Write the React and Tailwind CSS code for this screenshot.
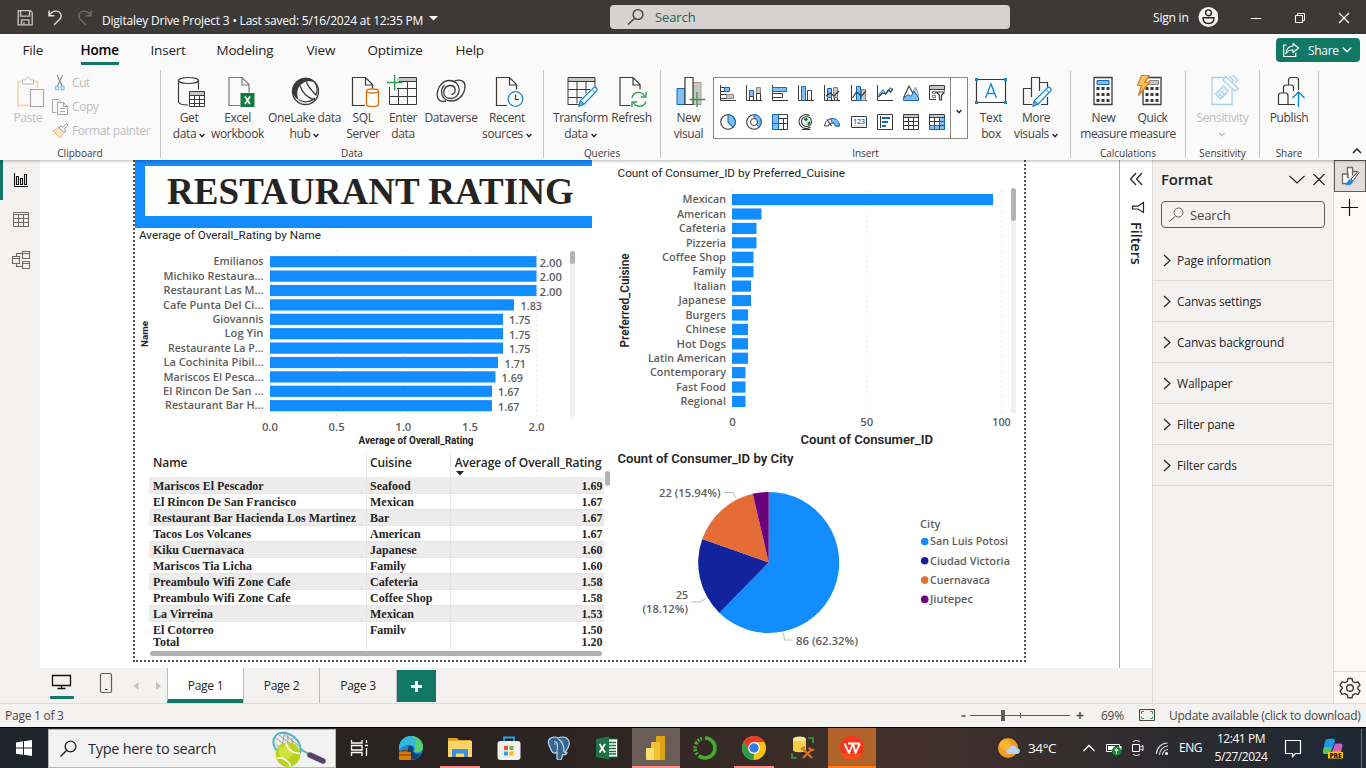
import React from "react";

const GREEN = "#117865";
const BLUE = "#118dff";

/* Drawing surface: the box is given as left, top, width, height. */
function Art({ box, className = "", children, ...rest }) {
  const [x, y, w, h] = box;
  return (
    <svg viewBox={`${x} ${y} ${w} ${h}`} width={w} height={h} fill="none" className={`block shrink-0 ${className}`} {...rest}>
      {children}
    </svg>
  );
}

function Caret({ className = "" }) {
  return (
    <Art box={[0, 0, 6, 5]} className={className}>
      <path d="M.6 1 3 3.6 5.4 1" stroke="currentColor" strokeWidth="1.4" />
    </Art>
  );
}

/* ------------------------------ title bar ------------------------------ */

function TitleBar() {
  return (
    <div className="flex h-[34px] shrink-0 items-center bg-[#3b3a38] text-white">
      <Art box={[0, 0, 102, 34]}>
        <g stroke="#c9c8c6" strokeWidth="1.3">
          <path d="M18.2 10.6h12.2l1.8 1.8v12.4h-14z" />
          <path d="M20.6 10.8v5.4h9v-5.4M21.5 24.6v-4.7h7.4v4.7M24 22v2.4" />
        </g>
        <path d="M49 10.5v5.3h5.3M49.3 15.5c3-5.3 9.2-5.6 11.2-2 1.2 2.4.6 4.3-1 6l-5.3 5.2" stroke="#e1dfdd" strokeWidth="1.4" />
        <path d="M91 10.5v5.3h-5.3M90.7 15.5c-3-5.3-9.2-5.6-11.2-2-1.2 2.4-.6 4.3 1 6l5.3 5.2" stroke="#6f6e6c" strokeWidth="1.4" />
      </Art>
      <div className="flex w-[508px] items-center">
        <span className="mt-2 text-[12px] tracking-[-0.21px] whitespace-nowrap">Digitaley Drive Project 3 • Last saved: 5/16/2024 at 12:35 PM</span>
        <Art box={[0, 0, 10, 5]} className="mt-0.5 ml-1.5">
          <path d="M0 0h9L4.5 4.5z" fill="#fff" />
        </Art>
      </div>
      <div className="flex h-6 w-[400px] items-center rounded-sm bg-[#d4d3d1] pl-[17px]">
        <Art box={[0, 0, 18, 18]}>
          <circle cx="11" cy="6.5" r="4.9" stroke="#3b3a39" strokeWidth="1.3" />
          <path d="m7.5 10.5-6.500 6" stroke="#3b3a39" strokeWidth="1.3" />
        </Art>
        <span className="ml-[10px] pt-px text-[13px] tracking-[-0.1px] text-[#2a5c50]">Search</span>
      </div>
      <span className="ml-[143px] w-[45px] pt-[2px] text-[12px] tracking-[-0.2px] whitespace-nowrap">Sign in</span>
      <Art box={[0, 0, 20, 20]}>
        <circle cx="10.5" cy="10" r="10" fill="#f3f2f1" />
        <circle cx="10.5" cy="5.8" r="2.9" stroke="#252423" strokeWidth="1.4" />
        <path d="M5 10.8h11c0 3.8-2.2 5.7-5.5 5.7S5 14.600 5 10.800z" stroke="#252423" strokeWidth="1.4" />
      </Art>
      <Art box={[1218, 0, 140, 34]}>
        <g stroke="#fff">
          <path d="M1251 18.500h10M1295.500 15.500h7v7h-7zM1297.500 15v-1.500h7v7h-1.500" />
          <path d="m1339 13 10 10m0-10-10 10" strokeWidth="1.200" />
        </g>
      </Art>
    </div>
  );
}

/* -------------------------------- ribbon -------------------------------- */

function Menu() {
  const tabs = [
    ["File", "w-[35px]"],
    ["Home", "w-[70px]"],
    ["Insert", "w-[66px]"],
    ["Modeling", "w-[90px]"],
    ["View", "w-[61px]"],
    ["Optimize", "w-[88px]"],
    ["Help", "w-10"],
  ];
  return (
    <div className="flex h-9 shrink-0 justify-between pr-[6px] pl-[22.5px]">
      <div className="flex h-8">
        {tabs.map(([name, w]) => (
          <div key={name} className={`${w} ${name === "File" ? "mr-[23px]" : ""} flex flex-col items-start text-[13.5px] text-[#252423]`}>
            {name === "Home" ? (
              <span className="mt-1.5 h-[25px] border-b-[3px] border-[#117865] leading-5 font-semibold tracking-[-0.2px] text-black">{name}</span>
            ) : (
              <span className="mt-1.5 leading-5 tracking-[-0.2px] whitespace-nowrap">{name}</span>
            )}
          </div>
        ))}
      </div>
      <div className="mt-1 flex h-6 w-21 items-center rounded bg-[#117865] pl-[7px] text-white">
        <Art box={[0, 0, 17, 16]}>
          <path d="M3.500 3H.7v11.500h12V11" stroke="#fff" strokeWidth="1.200" />
          <path d="M10 1.500 15.500 6 10 10.500V8C6.500 7.800 4.500 9 3 11.500 3.300 7 5.800 4.300 10 4z" stroke="#fff" strokeWidth="1.200" strokeLinejoin="round" />
        </Art>
        <span className="ml-[8px] w-[34px] pt-[2px] text-[12px] tracking-[-0.3px]">Share</span>
        <Art box={[0, 0, 10, 8]}>
          <path d="m.7 1.500 4.300 4.300 4.300-4.300" stroke="#fff" strokeWidth="1.300" />
        </Art>
      </div>
    </div>
  );
}

/* A ribbon button. `c` is the centre line its icon is drawn around. */
function Tool({ c, w, lines, caret, muted, children }) {
  return (
    <div className={`${w} flex shrink-0 flex-col items-center text-[12px] leading-4 tracking-[-0.37px] ${muted ? "text-[#c0bfbd]" : "text-[#444341]"}`}>
      <Art box={[c - 22, 70, 44, 40]} className="-mx-4">
        {children}
      </Art>
      {lines.map((line, i) => (
        <span key={i} className="flex min-h-4 items-center whitespace-nowrap">
          {line}
          {caret && i === lines.length - 1 && <Caret className={line === "" ? "-ml-px" : "mt-[2px] ml-[3px] text-[#252423]"} />}
        </span>
      ))}
    </div>
  );
}

function Group({ w, label, children }) {
  return (
    <div className={`${w} flex h-[88px] shrink-0 flex-col justify-between border-r border-[#c8c6c4]`}>
      <div className="flex">{children}</div>
      <span className="mb-[-3px] text-center text-[10px] leading-[15px] tracking-[-0.04px] text-[#3b3a39]">{label}</span>
    </div>
  );
}

const K = "#3b3a39";
const Pencil = ({ x, y }) => (
  <g transform={`translate(${x} ${y})`}>
    <path d="M1.500 19.500 3 14 16.500.9c1.300-.8 3.800 1.200 2.900 3.300L6.500 17.800z" fill="#fff" stroke="#0f86d0" strokeWidth="1.300" />
    <path d="M1.500 19.500 3 14l3.500 3.800zM14.500 3l3.200 3.200" fill="#6fb4e3" stroke="#0f86d0" />
  </g>
);

const g = { k: "#3b3a39", b: "#83beec", d: "#1068bd", y: "#c8c6c4" };
const galleryIcons = [
  <><path d="M.5 0v15.500H16" stroke={g.k} /><path d="M.5 2.500h4v4h-4z" fill="#fff" stroke={g.k} /><path d="M4.500 2.500h5v4h-5z" fill={g.b} stroke={g.d} /><path d="M.5 9.500h6v4h-6z" fill="#fff" stroke={g.k} /><path d="M6.500 9.500h7v4h-7z" fill={g.y} stroke="#8a8886" /></>,
  <><path d="M.5 0v15.500H16" stroke={g.k} /><path d="M3.500 5.500h4v6h-4z" fill={g.b} stroke={g.d} /><path d="M3.500 11.500h4v4h-4z" stroke={g.k} /><path d="M10.500 2.500h4v6h-4z" fill={g.y} stroke="#8a8886" /><path d="M10.500 8.500h4v7h-4z" stroke={g.k} /></>,
  <><path d="M.5 0v15.500H16" stroke={g.k} /><path d="M.5 2.500h14v4H.5z" fill={g.b} stroke={g.d} /><path d="M.5 8.500h10v4H.5z" stroke={g.k} /></>,
  <><path d="M.5 0v15.500H16" stroke={g.k} /><path d="M3.500 1.500h4v14h-4z" fill={g.b} stroke={g.d} /><path d="M9.500 5.500h4v10h-4z" stroke={g.k} /></>,
  <><path d="M.5 0v15.500H16" stroke={g.k} /><path d="M3.500 3.500h4v9h-4z" fill={g.b} stroke={g.d} /><path d="M9.500 2.500h4v10h-4z" fill={g.y} stroke="#8a8886" /><path d="m2 11 4-3 4 3 5-5M3.500 13v2m4-2v2m3-2v2m3-2v2" stroke={g.k} strokeWidth="1.200" /></>,
  <><path d="M.5 0v15.500H16" stroke={g.k} /><path d="M5.500 1.500h4v14h-4z" fill={g.b} stroke={g.d} /><path d="M10.500 4.500h4v11h-4z" fill={g.y} stroke="#8a8886" /><path d="m1.500 13 4-6 5 4 4.500-5" stroke={g.k} strokeWidth="1.200" /></>,
  <><path d="M.5 0v15.500H16" stroke={g.k} /><path d="m1.500 10 4.500-5 3 4 4-6 3 2" stroke="#3a96dd" strokeWidth="1.300" /><path d="m1.500 12 4-4 3 1 3-4 2 2 3-4" stroke={g.k} strokeWidth="1.200" /></>,
  <><path d="m9 8 3.500-6 3.500 9v4H9z" fill={g.y} stroke="#a19f9d" /><path d="m.5 13 5.500-12 6 11" fill="#fff" stroke={g.k} strokeWidth="1.100" /><path d="m.5 13.500 4.500-4 3 2 3-5 4.500 6v3H.5z" fill={g.b} stroke={g.d} /></>,
  <><path d="M1 1h14v3H1z" fill={g.y} /><path d="M15.500 5.500v-5H.5v14H7M.5 4.500h15" stroke={g.k} /><path d="M3.500 6.500h3v2h-3zM3.500 10.500h3v2h-3z" stroke="#777" /><path d="M7.500 7h8l-3 3.500V15h-2v-4.500z" fill="#fff" stroke={g.k} strokeWidth="1.200" /></>,
  <><circle cx="8" cy="8" r="7.300" fill="#fff" stroke={g.k} strokeWidth="1.100" /><path d="M8 .7A7.300 7.300 0 0 1 13 13.300L8 8z" fill={g.b} stroke={g.d} strokeWidth="1.100" /></>,
  <><circle cx="8" cy="8" r="7.300" stroke={g.k} strokeWidth="1.100" /><path d="M8 .7a7.300 7.300 0 0 1 5 12.600l-2.500-3A3.600 3.600 0 0 0 8 4.400z" fill={g.b} stroke={g.d} /><circle cx="8" cy="8" r="3.500" fill="#fff" stroke={g.k} /></>,
  <><path d="M.5.5h15v15H.5z" fill="#fff" stroke={g.k} /><path d="M7 4.500h8.500M7 9.500h8.500M11.500 4.500v11" stroke={g.k} /><path d="M.5.5h6v15h-6zM.5 9.500h6" fill={g.b} stroke={g.d} /></>,
  <><path d="M11.500 1.500a7 7 0 1 0 1 11.500M4 15.500h8.500" stroke={g.k} strokeWidth="1.100" /><circle cx="8.500" cy="7.500" r="5" fill="#eef6f0" stroke={g.k} strokeWidth="1.100" /><path d="m5.500 5 3-1.500 1.500 2-2 2zM9.500 8.500l3-1.500-.8 3.500-2 1z" fill="#0f7b3c" /></>,
  <><path d="M.6 12c.6-9.500 14-9.500 14.900 0h-4c-.6-4-6.500-4-7 0z" fill="#fff" stroke={g.k} /><path d="M6.500 4.700c4-1.200 8.500 1.500 9 7.300h-4c-.4-2.500-1.500-3.300-3.300-3.600z" fill={g.b} stroke={g.d} /><path d="m3 5.500 4.500 6.500" stroke={g.k} strokeWidth="1.200" /></>,
  <><path d="M.5 2.500h15v11H.5z" fill="#fff" stroke={g.k} /><text x="8" y="10.300" textAnchor="middle" fontSize="7" fontWeight="600" fill="#0f6cbd">123</text><path d="M3 12h10" stroke="#999" strokeWidth=".6" /></>,
  <><path d="M.5.5h15v15H.5z" fill="#fff" stroke={g.k} /><path d="M3.500 2v12" stroke={g.k} /><path d="M5 4h8M5 8h6M5 12h4" stroke={g.d} strokeWidth="2" /></>,
  <><path d="M.5.5h15v3H.5z" fill={g.y} /><path d="M.5.5h15v15H.5zM.5 3.500h15M.5 7.500h15M.5 11.500h15M5.500 3.500v12M10.500 3.500v12" stroke={g.k} /></>,
  <><path d="M.5.5h15v3H.5z" fill={g.y} /><path d="M10.500 3.500h5v12H.5v-4h10z" fill={g.b} /><path d="M.5.5h15v15H.5zM.5 3.500h15M.5 7.500h15M.5 11.500h15M5.500 3.500v12M10.500 3.500v12" stroke={g.k} /><path d="M15.500 3.500v12H.5v-4h10v-8M5.500 11.500v4M10.500 7.500h5" stroke={g.d} /></>,
];

function Ribbon() {
  return (
    <div className="flex shrink-0 items-start">
      <div className="flex h-[88px] w-[161px] shrink-0 flex-col justify-between border-r border-[#c8c6c4] text-[#bebdbb]">
        <div className="flex">
          <Tool c={28} w="w-14 -mr-1" lines={["Paste"]} muted>
            <path d="M23 81.500h-5v24h11.500M33 81.500h4.500v7" stroke="#f5dcb5" strokeWidth="2" />
            <path d="M22.500 84v-4h3c.5-3.500 4.500-3.500 5 0h3v4z" fill="#fff" stroke="#b9b8b6" />
            <path d="M30.500 89.500h13v17h-13z" fill="#fafafa" stroke="#a9a8a6" strokeWidth="1.200" />
          </Tool>
          <div className="flex flex-col pt-px text-[12px] leading-6 tracking-[-0.4px]">
            {[
              ["Cut", <><path d="m5 0 5 11M10.500 0l-5 11" stroke="#8f8e8c" strokeWidth="1.200" /><path d="M3.500 11.500h3v3h-3zM9 11.500h3v3H9z" stroke="#8ac4e8" strokeWidth="1.300" /></>],
              ["Copy", <><path d="M4.500 13.500H.5V.5h6l2 2" stroke="#a9a8a6" /><path d="M5.500 3.500h6l4 4v8h-10zM11.500 3.500v4h4M8 9.500h5M8 12.500h5" stroke="#a9a8a6" /></>],
              ["Format painter", <><path d="m1 8 6-3.500 5 5L8 15z" fill="#fbe3c4" stroke="#e5b98a" /><path d="m7 4.500 2-1.500 1.500 1.500 4-4L16 2l-3.500 4L14 8l-2 1.500z" fill="#fff" stroke="#989795" /></>],
            ].map(([t, icon]) => (
              <div key={t} className="flex h-6 items-center">
                <Art box={[0, 0, 17, 16]} className="mr-[3px]">{icon}</Art>
                <span className="whitespace-nowrap">{t}</span>
              </div>
            ))}
          </div>
        </div>
        <span className="mb-[-3px] text-center text-[10px] leading-[15px] text-[#3b3a39]">Clipboard</span>
      </div>

      <Group w="w-[383px]" label="Data">
        <Tool c={189} w="w-14" lines={["Get", "data"]} caret>
          <ellipse cx="188.500" cy="80.500" rx="10" ry="3" stroke={K} strokeWidth="1.200" />
          <path d="M178.500 80.500v21c0 2.500 4.500 3.500 9.500 3.500M198.500 80.500v9" stroke={K} strokeWidth="1.200" />
          <path d="M189.500 91.500h15v15h-15z" fill="#fff" />
          <path d="M189.500 91.500h15v4h-15z" fill="#c8c6c4" />
          <path d="M189.500 91.500h15v15h-15zM190 95.500h15M190 99.500h15M190 103.500h15M194.500 95v11M199.500 95v11" stroke={K} />
        </Tool>
        <Tool c={237.5} w="w-[41px]" lines={["Excel", "workbook"]}>
          <path d="M240 105.500h-11.500v-28h13l7 7v8M241.500 77.500v7.500h7" stroke="#7a7977" strokeWidth="1.200" />
          <path d="M240 93h14v14h-14z" fill="#107c41" />
          <path d="m244.500 96.500 5 7.500m0-7.500-5 7.500" stroke="#fff" strokeWidth="1.700" />
        </Tool>
        <Tool c={304.5} w="w-[93px]" lines={["OneLake data", "hub"]} caret>
          <circle cx="305" cy="91.500" r="13" stroke={K} strokeWidth="1.300" />
          <path d="M296 82.500c4.500-6.500 14.500-6.500 18.500 0-5-2.500-11-1.500-15 3-3.300 4-3.300 9-1.500 14-7-3-8.500-11.500-2-17z" fill={K} />
          <path d="M299.500 85.500c2 7 7 12.500 15.500 14.500M306 82c1 4 5 8.500 9.500 13 1.500-4 1-9-1-12.500M298 99.500c5 3.500 12 3 16.500-1.500" stroke={K} strokeWidth="1.200" />
        </Tool>
        <Tool c={363} w="w-6" lines={["SQL", "Server"]}>
          <path d="M365 105.500h-12.500v-28h13l7 7v4M365.500 77.500v7.500h7" stroke={K} strokeWidth="1.200" />
          <path d="M366.500 91v13c0 3.500 12 3.500 12 0V91" fill="#fff" stroke="#d9731a" strokeWidth="1.400" />
          <ellipse cx="372.500" cy="91" rx="6" ry="2" fill="#fff" stroke="#d9731a" strokeWidth="1.400" />
        </Tool>
        <Tool c={403} w="w-14" lines={["Enter", "data"]}>
          <path d="M397 77.500h19v4h-19z" fill="#c8c6c4" />
          <path d="M399 77.500h17.500v27h-27V87M399 81.500h17.500M397 88.500h19M389.500 96.500h27M398.500 89v15M407.500 82v22" stroke={K} />
          <path d="M394.700 75v15.500M387 82.500h15.500" stroke="#2e9b4e" strokeWidth="1.400" />
        </Tool>
        <Tool c={451} w="w-10" lines={["Dataverse"]}>
          <g stroke={K} strokeWidth="1.300">
            <path d="M446 101c-5 1-8.500-.5-8.800-5-.4-8.500 5-15.500 12.500-15.500 6 0 9.500 4.500 9.500 9.500s-4 8.500-8.500 8.500-7-3-7-6.500 3-6.500 6.500-6.500c3 0 5 2 5 4.800 0 2.500-2 4-4 4" />
            <path d="M454.500 81c6-2 10.500 0 10.500 5 0 8.500-6.500 15-14 15-5.500 0-9.500-4-9.500-9 0-2.500 1-5 3-6.800" />
          </g>
        </Tool>
        <Tool c={507} w="w-[72px]" lines={["Recent", "sources"]} caret>
          <path d="M507 105.500h-10.500v-28h13l7 7v5M509.500 77.500v7.500h7" stroke={K} strokeWidth="1.200" />
          <circle cx="515.500" cy="99" r="7.300" fill="#fff" stroke="#1a86d0" strokeWidth="1.300" />
          <path d="M515.500 94.500v5h3.500" stroke={K} strokeWidth="1.200" />
        </Tool>
      </Group>

      <Group w="w-[117px]" label="Queries">
        <Tool c={580.5} w="w-[73px]" lines={["Transform", "data"]} caret>
          <path d="M567.500 77.500h27v4h-27z" fill="#c8c6c4" />
          <path d="M578 104.500h-10.500v-27h27v10M567.500 81.500h27M567.500 89.500h22M567.500 97.500h14M576.500 81.500v22M585.500 81.500v12" stroke={K} />
          <Pencil x={577} y={86.500} />
        </Tool>
        <Tool c={631.5} w="w-[29px]" lines={["Refresh"]}>
          <path d="M630 105.500h-10.500v-28h13l7 7v5M632.500 77.500v7.500h7" stroke={K} strokeWidth="1.200" />
          <path d="M631.500 98c1-6.500 9.500-7.500 12.500-2M645.500 92v5h-5M645.500 101.500c-1.500 5.500-9.500 6.500-12.500 1.500M631.500 107v-5h5" stroke="#3a9d55" strokeWidth="1.400" />
        </Tool>
      </Group>

      <Group w="w-[410px]" label="Insert">
        <Tool c={688.5} w="w-[52px] pl-[3px]" lines={["New", "visual"]}>
          <path d="M676.500 88.500h8v16h-8z" fill="#83beec" stroke="#1068bd" />
          <path d="M692.500 82.500h8v22h-8z" fill="#c8c6c4" stroke="#a19f9d" />
          <path d="M684.500 77.500h8v27h-8z" fill="#fff" stroke={K} strokeWidth="1.200" />
          <path d="M696.500 92v15M689 99.500h16" stroke="#2e9b4e" strokeWidth="1.300" />
        </Tool>
        <div className="mt-[7px] flex h-[62px] w-[255px] shrink-0 border border-[#8a8886] bg-white">
          <div className="grid w-[236px] grid-cols-9 content-start gap-y-[13px] pt-[7px] pl-[1px]">
            {galleryIcons.map((icon, i) => (
              <Art key={i} box={[0, 0, 16, 16]} className="mx-auto">{icon}</Art>
            ))}
          </div>
          <div className="flex grow items-center justify-center border-l border-[#8a8886] text-[#252423]">
            <Caret className="mt-1.5" />
          </div>
        </div>
        <Tool c={991} w="w-[46px]" lines={["Text", "box"]}>
          <path d="M976.500 79.500h29v23h-29z" fill="#fff" stroke={K} strokeWidth="1.200" />
          <path d="M975 78h3v3h-3zM1004 78h3v3h-3zM975 101h3v3h-3zM1004 101h3v3h-3z" fill="#1a86d0" />
          <path d="m985.500 98 5.500-14 5.500 14M987.500 93.500h7" stroke="#1a86d0" strokeWidth="1.400" />
        </Tool>
        <Tool c={1036} w="w-[44px]" lines={["More", "visuals"]} caret>
          <path d="M1032 104.500h-8.500v-16h8M1031.500 97V77.500h8V91M1039.500 82.500h8v6M1041 104.500h6.500V97" stroke={K} strokeWidth="1.200" />
          <Pencil x={1031.5} y={86.500} />
        </Tool>
      </Group>

      <Group w="w-[115px]" label="Calculations">
        <Tool c={1103.5} w="w-[65px]" lines={["New", "measure"]}>
          <path d="M1093.500 77.500h18v27h-18z" fill="#fff" stroke={K} strokeWidth="1.300" />
          <path d="M1096.500 80.500h12v4h-12z" fill="#83beec" stroke="#1068bd" />
          <path d="M1096 88.500h13M1096 94.500h13M1096 100.500h13" stroke={K} strokeWidth="3" strokeDasharray="3 2" />
        </Tool>
        <Tool c={1152.5} w="w-[33px]" lines={["Quick", "measure"]}>
          <path d="M1142.500 90v14.500h18v-27h-13" fill="none" stroke={K} strokeWidth="1.300" />
          <path d="M1149 80.500h9v4h-11z" fill="#c8c6c4" stroke="#8a8886" />
          <path d="M1145 88.500h13M1145 94.500h13M1145 100.500h13" stroke={K} strokeWidth="3" strokeDasharray="3 2" />
          <path d="m1141 75.500-4 10h4l-3 10 11-13h-4.500l4-7z" fill="#fbc15e" stroke="#d97a1e" strokeWidth="1.200" />
        </Tool>
      </Group>

      <Group w="w-[74px]" label="Sensitivity">
        <Tool c={1222.5} w="w-[73px]" lines={["Sensitivity", ""]} caret muted>
          <path d="M1224 77.500h-12.500v27h20v-16" stroke="#abd3ec" strokeWidth="1.300" />
          <path d="m1215 94 8-8 5 5-8 8zM1218 94l5 4M1220 91l5 4" fill="#e3f1fa" stroke="#abd3ec" strokeWidth="1.300" />
          <path d="m1222.500 80 3-3.500 12 12-3 2.500zM1229 76.500l4 4-2 2M1232 75l5 5-2.500 3" fill="#fff" stroke="#abd3ec" strokeWidth="1.500" />
        </Tool>
      </Group>

      <Group w="w-[59px]" label="Share">
        <Tool c={1289} w="w-[58px]" lines={["Publish"]}>
          <path d="M1295 104.500h-16.500v-9c0-2 1-2.500 2.500-2.500h4.500c1.500 0 2.500 1 2.500 2.500v9M1283.500 93v-5.500c0-1.500 1-2.500 2.500-2.500h5c1.500 0 2.500 1 2.500 2.500V91M1288.500 85v-5c0-1.500 1-2.500 2.500-2.500h5c1.500 0 2.500 1 2.500 2.500v10" stroke={K} strokeWidth="1.200" />
          <path d="M1298.500 107V92.500M1292.500 98l6-6 6 6" stroke="#0f86d0" strokeWidth="1.400" />
        </Tool>
      </Group>
      <Art box={[0, 0, 10, 6]} className="mt-[78px] ml-[33px]">
        <path d="m1 5 4-4 4 4" stroke="#252423" strokeWidth="1.500" />
      </Art>
    </div>
  );
}

/* ------------------------------ report page ----------------------------- */

function T({ x, y, len, end, mid, size = 11, fill = "#605e5c", weight = 600, din, children, ...rest }) {
  return (
    <text x={x} y={y} textLength={len} lengthAdjust="spacingAndGlyphs" textAnchor={end ? "end" : mid ? "middle" : "start"} fontSize={size} fontWeight={weight} fill={fill}
      className={din ? "font-[Roboto,sans-serif]" : "font-['Open_Sans',sans-serif]"} {...rest}>
      {children}
    </text>
  );
}

const ratings = [
  ["Emilianos", 50, 536.5, "2.00", 539.5],
  ["Michiko Restaura...", 100, 536.5, "2.00", 539.5],
  ["Restaurant Las M...", 100, 536.5, "2.00", 539.5],
  ["Cafe Punta Del Ci...", 100.5, 514, "1.83", 520.5],
  ["Giovannis", 51, 503, "1.75", 509],
  ["Log Yin", 39, 503, "1.75", 509],
  ["Restaurante La P...", 95.5, 503, "1.75", 509],
  ["La Cochinita Pibil...", 100, 498, "1.71", 504.5],
  ["Mariscos El Pesca...", 100, 495.5, "1.69", 501.5],
  ["El Rincon De San ...", 100.5, 492, "1.67", 498],
  ["Restaurant Bar H...", 98.5, 492, "1.67", 498],
];

function RatingChart() {
  return (
    <Art box={[135, 228, 479, 223]}>
      <T x={139} y={239} len={182} din weight={400} fill="#252423">Average of Overall_Rating by Name</T>
      {[270, 336.6, 403.3, 470, 536.5].map((x, i) => (
        <g key={x}>
          <path d={`M${x} 250v167`} stroke="#d6d6d6" strokeDasharray="1 4" />
          <T x={x} y={431} len={16} mid>{(i * 0.5).toFixed(1)}</T>
        </g>
      ))}
      {ratings.map(([name, len, to, value, at], i) => {
        const y = 256.1 + i * 14.4;
        return (
          <g key={name}>
            <T x={263.5} y={Math.round(y + 9.25)} len={len} end>{name}</T>
            <rect x={270} y={y} width={to - 270} height={11.2} fill={BLUE} />
            <T x={at} y={Math.round(y + 10.7)} len={value === "2.00" ? 22.5 : 21.5}>{value}</T>
          </g>
        );
      })}
      <T x={0} y={0} len={26} mid size={9} weight={700} din fill="#252423" transform="translate(148 334) rotate(-90)">Name</T>
      <T x={358.5} y={444} len={115} size={10} weight={700} din fill="#252423">Average of Overall_Rating</T>
      <rect x={570} y={251} width={5} height={166} rx={2.5} fill="#f0f0f0" />
      <rect x={570} y={251} width={5} height={13} rx={2.5} fill="#b3b3b3" />
    </Art>
  );
}

const cuisines = [
  ["Mexican", 43.5, 993],
  ["American", 49, 761.5],
  ["Cafeteria", 47, 756.5],
  ["Pizzeria", 40, 756.5],
  ["Coffee Shop", 64, 753.5],
  ["Family", 33.5, 753.5],
  ["Italian", 32.5, 751],
  ["Japanese", 47.5, 751],
  ["Burgers", 40.5, 748],
  ["Chinese", 40.5, 748],
  ["Hot Dogs", 49.5, 748],
  ["Latin American", 78, 748],
  ["Contemporary", 76, 745.5],
  ["Fast Food", 50, 745.5],
  ["Regional", 45.5, 745.5],
];

function CuisineChart() {
  return (
    <Art box={[614, 160, 410, 290]}>
      <T x={617.5} y={177} len={227.5} din weight={400} fill="#252423">Count of Consumer_ID by Preferred_Cuisine</T>
      {[[732.5, "0", 6.5], [866.8, "50", 13], [1001.5, "100", 18.5]].map(([x, t, len]) => (
        <g key={x}>
          <path d={`M${x} 191v223`} stroke="#d6d6d6" strokeDasharray="1 4" />
          <T x={x} y={426} len={len} mid>{t}</T>
        </g>
      ))}
      {cuisines.map(([name, len, to], i) => {
        const y = 194 + i * 14.42;
        return (
          <g key={name}>
            <T x={726} y={Math.round(y + 9.3)} len={len} end>{name}</T>
            <rect x={732} y={y} width={to - 732} height={11.2} fill={BLUE} />
          </g>
        );
      })}
      <T x={0} y={0} len={94} mid size={12} weight={600} din fill="#252423" transform="translate(628.500 300.500) rotate(-90)">Preferred_Cuisine</T>
      <T x={800.5} y={444} len={132.5} size={13} weight={600} din fill="#252423">Count of Consumer_ID</T>
      <rect x={1011} y={188} width={5} height={225} rx={2.5} fill="#f0f0f0" />
      <rect x={1011} y={188} width={5} height={33} rx={2.5} fill="#b3b3b3" />
    </Art>
  );
}

const cities = [
  ["San Luis Potosi", 86, "#118dff", 78],
  ["Ciudad Victoria", 25, "#12239e", 80],
  ["Cuernavaca", 22, "#e66c37", 60],
  ["Jiutepec", 5, "#6b007b", 43],
];

function CityChart() {
  const total = 138;
  const [cx, cy, r] = [768.7, 562.5, 70.5];
  let sum = 0;
  const point = (v) => {
    const a = (v / total) * Math.PI * 2;
    return `${cx + r * Math.sin(a)} ${cy - r * Math.cos(a)}`;
  };
  return (
    <Art box={[614, 450, 410, 210]}>
      <T x={617.5} y={463} len={176} size={12.5} weight={600} din fill="#252423">Count of Consumer_ID by City</T>
      {cities.map(([name, v, color]) => {
        const a = sum;
        sum += v;
        return <path key={name} d={`M${cx} ${cy}L${point(a)}A${r} ${r} 0 ${v > total / 2 ? 1 : 0} 1 ${point(sum)}z`} fill={color} />;
      })}
      <path d="M724 492.500h9l3 6M691 602h9l6.500-4M783.500 633l1 7h8" stroke="#b8b8b8" />
      <T x={659} y={497} len={61.5}>22 (15.94%)</T>
      <T x={688} y={599} len={12} end>25</T>
      <T x={688} y={613} len={45.5} end>(18.12%)</T>
      <T x={796} y={645} len={62}>86 (62.32%)</T>
      <T x={920} y={528} len={20.5}>City</T>
      {cities.map(([name, , color, len], i) => (
        <g key={name}>
          <circle cx={924.7} cy={541.5 + i * 19.3} r={3.8} fill={color} />
          <T x={930} y={Math.round(545.2 + i * 19.3)} len={len}>{name}</T>
        </g>
      ))}
    </Art>
  );
}

const rows = [
  ["Mariscos El Pescador", "Seafood", "1.69"],
  ["El Rincon De San Francisco", "Mexican", "1.67"],
  ["Restaurant Bar Hacienda Los Martinez", "Bar", "1.67"],
  ["Tacos Los Volcanes", "American", "1.67"],
  ["Kiku Cuernavaca", "Japanese", "1.60"],
  ["Mariscos Tia Licha", "Family", "1.60"],
  ["Preambulo Wifi Zone Cafe", "Cafeteria", "1.58"],
  ["Preambulo Wifi Zone Cafe", "Coffee Shop", "1.58"],
  ["La Virreina", "Mexican", "1.53"],
  ["El Cotorreo", "Family", "1.50"],
];

function Row({ cells, className = "" }) {
  return (
    <div className={`grid grid-cols-[218px_84px_1fr] ${className}`}>
      <span className="border-r border-[#e6e6e6] pl-1">{cells[0]}</span>
      <span className="border-r border-[#e6e6e6] pl-[3px]">{cells[1]}</span>
      <span className="pr-[1.5px] text-right">{cells[2]}</span>
    </div>
  );
}

function RatingTable() {
  return (
    <div className="flex h-[209px] pt-[2px] pl-[14px]">
      <div className="flex w-[455px] shrink-0 flex-col whitespace-nowrap text-[#252423]">
        <Row className="h-[25px] border-b border-[#eee] text-[12px] leading-5 font-semibold tracking-[-0.07px]"
          cells={["Name", "Cuisine", <span className="flex flex-col items-end pr-px leading-5">Average of Overall_Rating<Art box={[0, 0, 9, 5]} className="-mt-0.5 ml-[5px] self-start"><path d="M0 0h8L4 4.500z" fill="#252423" /></Art></span>]} />
        <div className="h-[156px] overflow-hidden font-['Liberation_Serif',serif] text-[12px] leading-4 font-bold">
          {rows.map((r, i) => (
            <Row key={i} cells={r} className={`h-4 border-b border-[#e6e6e6] ${i % 2 ? "bg-white" : "bg-[#ececec]"}`} />
          ))}
        </div>
        <Row className="h-4 font-['Liberation_Serif',serif] text-[12px] leading-4 font-bold" cells={["Total", "", "1.20"]} />
        <div className="mt-px ml-px h-[5px] w-[452px] rounded bg-[#b0b0b0]" />
      </div>
      <div className="mt-[18px] ml-px h-[15px] w-[5px] shrink-0 rounded bg-[#b3b3b3]" />
    </div>
  );
}

function Report() {
  return (
    <div className="h-[508px] grow bg-white pl-[93px]">
      <div className="flex h-[502px] w-[893px] border-2 border-t-0 border-dotted border-[#555]">
        <div className="flex w-[479px] shrink-0 flex-col">
          <div className="h-[68px] w-[457px] bg-[#118dff] pt-[6px] pl-[10px]">
            <div className="flex h-[50px] items-center bg-white pl-[22px] font-['Liberation_Serif',serif] text-[37px] font-bold tracking-[0.05px] whitespace-nowrap text-[#252423]">
              <span className="pt-px">RESTAURANT RATING</span>
            </div>
          </div>
          <RatingChart />
          <RatingTable />
        </div>
        <div className="flex w-[410px] flex-col">
          <CuisineChart />
          <CityChart />
        </div>
      </div>
    </div>
  );
}

function PageTabs() {
  const look = [
    "w-[76px] border-b-4 border-b-[#117865] bg-white pt-[5px]",
    "w-[76px] pt-px",
    "w-[77px] pt-px",
  ];
  return (
    <div className="flex h-[35px] shrink-0 bg-[#f3f2f1]">
      <Art box={[40, 668, 127, 35]}>
        <path d="M52.500 675.500h18v10h-18zM61.500 685.500v3M57.500 688.500h8" stroke="#111" strokeWidth="1.300" />
        <rect x="50" y="696" width="24" height="3" rx="1" fill={GREEN} />
        <rect x="100.500" y="673.500" width="11" height="19" rx="1.500" stroke="#605e5c" strokeWidth="1.200" />
        <path d="M105 689.500h2.500" stroke="#333" />
        <path d="m138.500 682-5 4 5 4zM156 682l5 4-5 4z" fill="#c4c3c1" />
      </Art>
      {["Page 1", "Page 2", "Page 3"].map((p, i) => (
        <div key={p} className={`flex h-[35px] items-center justify-center border-l border-l-[#bdbbb9] text-[12px] tracking-[-0.25px] text-[#252423] ${look[i]}`}>{p}</div>
      ))}
      <div className="mt-[2px] flex h-8 w-10 items-center justify-center border-l border-[#bdbbb9] bg-[#117865]">
        <Art box={[0, 0, 11, 11]}><path d="M5.500 0v11M0 5.500h11" stroke="#fff" strokeWidth="3" /></Art>
      </div>
    </div>
  );
}

/* --------------------------------- panes -------------------------------- */

function LeftRail() {
  return (
    <div className="w-10 shrink-0 bg-[#f3f2f1]">
      <Art box={[0, 160, 40, 120]}>
        <path d="M0 160h3v40H0z" fill={GREEN} />
        <path d="M14.500 173v13.500H28M16.500 176.500h2v8h-2zM20.500 178.500h2v6h-2zM24.500 174.500h2v10h-2z" stroke="#111" strokeWidth="1.100" />
        <path d="M13.500 212.500h15v14h-15zM13.500 214.500h15M13.500 218.500h15M13.500 222.500h15M18.500 214v12M23.500 214v12" stroke="#6b6a68" />
        <path d="M12.500 256.500h7v7h-7zM12.500 258.500h7M22.500 251.500h7v7h-7zM22.500 253.500h7M22.500 261.500h7v7h-7zM22.500 263.500h7M16.500 256v-2.500h6M16.500 264v2.500h6" stroke="#6b6a68" strokeWidth="1.100" />
      </Art>
    </div>
  );
}

function FiltersPane() {
  return (
    <div className="flex h-[508px] w-[33px] shrink-0 flex-col items-center border-l border-[#aaa] bg-white">
      <Art box={[1120, 160, 32, 62]}>
        <path d="m1136 173-5.500 6 5.500 6M1142 173l-5.500 6 5.500 6" stroke="#252423" strokeWidth="1.200" />
        <path d="M1143.500 202.500v10l-5.500-3.500h-5.500v-2.800h5.500z" stroke="#252423" strokeWidth="1.200" />
      </Art>
      <span className="text-[14.5px] leading-[18px] font-semibold tracking-[-0.05px] text-[#252423] [writing-mode:vertical-rl]">Filters</span>
    </div>
  );
}

function FormatPane() {
  return (
    <div className="flex w-[181px] shrink-0 flex-col border-l border-[#dddbd9] bg-[#f3f2f1] text-[#252423]">
      <div className="flex h-[38px] items-center pl-2">
        <span className="w-32 text-[15px] font-semibold tracking-[-0.2px]">Format</span>
        <Art box={[0, 0, 38, 14]}>
          <path d="m.5 4 7.500 7 7.500-7M24.500 2l11 11M35.500 2l-11 11" stroke="#252423" strokeWidth="1.200" />
        </Art>
      </div>
      <div className="mt-[3px] ml-2 flex h-[27px] w-[164px] items-center rounded-sm border border-[#605e5c] pl-[7px]">
        <Art box={[0, 0, 15, 15]}>
          <circle cx="9.500" cy="5.500" r="4.500" stroke="#605e5c" />
          <path d="m6.500 9-6 5.500" stroke="#605e5c" />
        </Art>
        <span className="ml-[6px] pt-[2px] text-[13px] tracking-[-0.1px] text-[#484644]">Search</span>
      </div>
      <div className="mt-[12px] flex flex-col">
        {["Page information", "Canvas settings", "Canvas background", "Wallpaper", "Filter pane", "Filter cards"].map((t) => (
          <div key={t} className="flex h-[41px] items-center border-b border-[#dddbd9] pl-[10px]">
            <Art box={[0, 0, 9, 13]}><path d="m1 1 6 5.500-6 5.500" stroke="#252423" strokeWidth="1.200" /></Art>
            <span className="ml-[5px] pt-[2px] text-[12px] font-medium tracking-[-0.16px]">{t}</span>
          </div>
        ))}
      </div>
    </div>
  );
}

function RightRail() {
  return (
    <div className="flex w-[33px] shrink-0 flex-col justify-between border-l border-[#dddbd9] bg-[#faf9f8]">
      <div className="flex flex-col">
        <div className="h-8 w-8 border border-[#605e5c] bg-[#e1dfdd]">
          <Art box={[1335, 161, 30, 30]}>
            <path d="M1348 183.500h-5.500v-9.500h5.500v4M1347.500 178v-10.500h5v8M1352.500 171.500h5" stroke="#6b6a68" strokeWidth="1.300" fill="#fff" />
            <path d="m1351 179 7-7.500 1 1-6 8.500z" fill="#fff" stroke="#555" />
            <path d="M1345 185c2-1 2-4 4.500-5.500 2.500-.5 4 1.500 3 3.500-1.500 2.500-4.500 2.500-7.500 2z" fill="#2b88d8" />
          </Art>
        </div>
        <Art box={[1334, 192, 32, 30]}><path d="M1349.500 199v17M1341 207.500h17" stroke="#111" strokeWidth="1.200" /></Art>
      </div>
      <div className="flex h-8 items-center justify-center border-t border-[#dddbd9]">
        <Art box={[0, 0, 22, 22]}>
          <path d="M9 1.500h4l.8 3 2.200 1.200 3-.9 2 3.400-2.200 2.100v1.500l2.200 2.200-2 3.400-3-.8-2.200 1.200-.8 3H9l-.8-3L6 16.600l-3 .8L1 14l2.200-2.200v-1.500L1 8.200l2-3.400 3 .9 2.200-1.200z" stroke="#3b3a39" strokeWidth="1.400" strokeLinejoin="round" />
          <circle cx="11" cy="11" r="3.300" stroke="#3b3a39" strokeWidth="1.400" />
        </Art>
      </div>
    </div>
  );
}

function StatusBar() {
  return (
    <div className="flex h-6 shrink-0 items-center border-t border-[#dddbd9] bg-[#f3f2f1] text-[12px] tracking-[-0.25px] text-[#484644]">
      <span className="w-[956px] pt-px pl-[5px]">Page 1 of 3</span>
      <Art box={[956, 704, 145, 23]}>
        <path d="M961.500 716h4M1076.500 715.500h7M1080 712v7" stroke="#484644" strokeWidth="1.400" />
        <path d="M970 715.500h100M1020.500 713v5" stroke="#605e5c" />
        <path d="M1001 710h4v11h-4z" fill="#605e5c" />
      </Art>
      <span className="w-[38px] pt-px">69%</span>
      <Art box={[0, 0, 17, 13]}>
        <path d="M.5.5h15v11H.5z" stroke="#484644" />
        <path d="M2.500 5V2.500H5M11 2.500h2.500V5M13.500 7.500V9.500H11M5 9.500H2.500v-2" stroke="#2e9b4e" />
      </Art>
      <span className="ml-[13px] pt-px whitespace-nowrap">Update available (click to download)</span>
    </div>
  );
}

/* -------------------------------- taskbar ------------------------------- */

const apps = [
  { name: "tasks", art: <path d="M1.500 4v3H12V4M1.500 20v-3.500H12V20M1.500 9.500H12v4.500H1.500zM16.500 4v3M16.500 12v8M15 9.500h3" stroke="#fff" strokeWidth="1.300" /> },
  { name: "edge", art: <><circle cx="12" cy="12" r="12" fill="#1a87d6" /><path d="M0 11C1 3 8-1 14 .2c7 1.300 10.500 7 10 12-1 4-6 5-9 3.500 2-3-.5-7-4.500-7C5 8.700 1 12 0 15z" fill="#35b8d8" /><path d="M12 0c8 .2 12 6 12 11-.5 5-5.500 6-9 4.700 2.300-4 .5-8 3-11.700z" fill="#58cf6a" /><path d="M9 11c3-3 7 .5 5 4.500 2 3 6 3 8 1.500-3 6-9 8-13 5z" fill="#123f74" /><rect x="0" y="16" width="12" height="8" rx="1" fill="#d97a0b" /><path d="M3.500 16v-1.500h5V16M0 19h12" stroke="#7c3e06" /></> },
  { name: "files", bar: "w-10", art: <><path d="M0 2h9l2 2h12v17H0z" fill="#e0a224" /><path d="M0 5h24v16H0z" fill="#fbd567" /><path d="M4 21v-8h16v8h-4v-3.500H8V21z" fill="#3a92de" /></> },
  { name: "store", art: <><path d="M7 6V1.500h10V6" stroke="#21a3e6" strokeWidth="1.800" /><rect x=".5" y="5" width="23" height="19" rx="3" fill="#f1f0ef" /><path d="M7 10h4v4H7z" fill="#e8502b" /><path d="M12.500 10h4v4h-4z" fill="#7cb928" /><path d="M7 15.500h4v4H7z" fill="#2aa4ea" /><path d="M12.500 15.500h4v4h-4z" fill="#fbb910" /></> },
  { name: "postgres", art: <><path d="M5 2c4-2 7 0 7 0s5-2 8.500 0C26 6 22 13 19 16.500l2 .5c-1 2-3 2-4.500 1.500l-1 4.500c-1.500 2-4.500 1-4.500-1v-6c-3 2.500-5 .5-6-2.500C2 8 1 4 5 2z" fill="#336791" stroke="#c9dceb" strokeWidth="1.200" /><path d="M8 5.500c3.500 0 4 3 3 9M12.500 3c3 2 5.500 6 5.500 13M14.500 6h2M8 8h1.500" stroke="#c9dceb" strokeWidth="1.200" /></> },
  { name: "excel", art: <><path d="M12 3h10.500v18H12z" fill="#fff" stroke="#1f7244" /><path d="M14 6.500h7M14 9.500h7M14 12.500h7M14 15.500h7M14 18h7" stroke="#1f7244" strokeWidth="1.500" /><path d="M1 3 14 .5v23L1 21z" fill="#1f7244" /><path d="m4.500 8 5.500 8.500m0-8.500-5.500 8.500" stroke="#fff" strokeWidth="1.800" /></> },
  { name: "powerbi", active: "bg-[#6a5d58]", bar: "w-12", art: <><rect x="12" y="0" width="9" height="24" rx="1" fill="#e0a515" /><rect x="7" y="6" width="9" height="18" rx="1" fill="#f2c230" /><rect x="2" y="12" width="8" height="12" rx="1" fill="#fbe06d" /></> },
  { name: "conda", art: <circle cx="12" cy="12" r="10" stroke="#43b02a" strokeWidth="3.600" strokeDasharray="38 2 2 1.500 2 1 2 2 3 1 2 1 2" transform="rotate(-90 12 12)" /> },
  { name: "chrome", bar: "w-10", art: <><circle cx="12" cy="12" r="12" fill="#fbc116" /><path d="M1.600 6A12 12 0 0 1 22.400 6H12L6.800 15z" fill="#e33b2e" /><path d="M1.600 6 6.800 15 12 18l-.5 6A12 12 0 0 1 1.600 6z" fill="#249f4b" /><circle cx="12" cy="12" r="5.900" fill="#fff" /><circle cx="12" cy="12" r="4.700" fill="#2f7bea" /></> },
  { name: "sqltools", art: <><path d="M2 3v11c0 3 13 3 13 0V3" fill="#f6cf45" /><ellipse cx="8.500" cy="3" rx="6.500" ry="2.500" fill="#fbe795" /><path d="M17 2h5v5M1 17v5h5" stroke="#3c9a45" strokeWidth="1.700" /><path d="m12 13 9 9M21 13l-9 9M10 13.500l4-2.500M18 11.500l2 3 3-1" stroke="#e0731c" strokeWidth="2.200" /></> },
  { name: "wps", active: "bg-[#b0642c]", bar: "w-12", orange: true, art: <><circle cx="12" cy="12" r="12" fill="#f5351c" /><path d="M1 17a12 12 0 0 0 22 0z" fill="#fa5a12" opacity=".6" /><path d="M4.500 7.500 9 17l4-9.500h6.500M8 7.500h5l2.500 9.500 4.500-9.500" stroke="#fff" strokeWidth="1.800" strokeLinejoin="round" /></> },
];

function TaskBar() {
  return (
    <div className="flex h-[41px] shrink-0 items-stretch border-t border-black bg-linear-to-r from-[#1c2731] via-[#433029] via-65% to-[#1c2834] text-white">
      <div className="flex w-12 items-center justify-center bg-[#1d242b]">
        <Art box={[0, 0, 16, 16]}><path d="M0 2.500 7 1.300V7.500H0zM8 1.200 16 0v7.500H8zM0 8.500h7v6.300L0 13.700zM8 8.500h8V16l-8-1.200z" fill="#fff" /></Art>
      </div>
      <div className="mt-px flex w-72 items-center border border-[#b5b5b5] bg-[#f2f2f2] pl-[11px] text-[#2b2b2b]">
        <Art box={[0, 0, 18, 18]}><circle cx="10.500" cy="6.500" r="5.400" stroke="#222" strokeWidth="1.300" /><path d="m6.500 10.500-6 6" stroke="#222" strokeWidth="1.400" /></Art>
        <span className="ml-[10px] w-[182px] text-[14.5px] tracking-[-0.28px] whitespace-nowrap">Type here to search</span>
        <Art box={[270, 729, 60, 38]}>
          <path d="m300 748 9 5" stroke="#44b4b8" strokeWidth="2" />
          <ellipse cx="287" cy="744.500" rx="15" ry="11" transform="rotate(38 287 744.500)" fill="#e9e9ea" stroke="#4ab7ba" strokeWidth="2" />
          <path d="m276 737 21 17M279 734l20 16M284 733l15 12M277 744l14 12M281 753l3-19M287 756l1-22M293 756l-1-19" stroke="#8e8795" strokeWidth=".8" />
          <path d="m310 754 13 6" stroke="#57406b" strokeWidth="5.500" strokeLinecap="round" />
          <circle cx="288" cy="753.500" r="12.300" fill="#b9d220" />
          <circle cx="285.500" cy="751" r="7" fill="#cfe43a" />
          <path d="M286 741.500c1 7 6 10.500 14 11M276.500 757c6-1 12 2 14 8.500" stroke="#fff" strokeWidth="1.600" />
        </Art>
      </div>
      <div className="flex w-[541px] bg-linear-to-r from-[#2b2322] from-40% to-[#40302a] pl-[2px]">
        {apps.map((a) => (
          <div key={a.name} className={`${a.active || ""} mr-px flex w-12 shrink-0 flex-col items-center justify-between pt-2`}>
            <Art box={[0, 0, 24, 24]}>{a.art}</Art>
            <div className={`${a.bar || ""} h-[2px] ${a.orange ? "bg-[#ff7a14]" : "bg-[#f98a86]"}`} />
          </div>
        ))}
      </div>
      <div className="flex grow items-center pl-[120px]">
        <Art box={[997, 735, 24, 26]}>
          <circle cx="1008" cy="748" r="10" fill="#f39a1d" />
          <circle cx="1005" cy="745" r="5.500" fill="#f8b52d" />
          <path d="M1009 754c-4 0-4-5 0-5.200 1-4 6.500-4.300 7.500-.5 4.500-.3 4.500 5.700 0 5.700z" fill="#b9d2f7" />
        </Art>
        <span className="ml-[7px] w-[52px] text-[13.5px] tracking-[-0.4px]">34°C</span>
        <Art box={[1080, 735, 99, 26]}>
          <path d="m1083.500 751 5.500-5.500 5.500 5.500" stroke="#fff" strokeWidth="1.300" />
          <path d="M1106.500 744.500h13v7h-13z" stroke="#fff" />
          <path d="M1108 746h7v4h-7zM1120 746h1.500v4h-1.500z" fill="#fff" />
          <circle cx="1116.500" cy="751" r="4.700" fill="#168a2e" />
          <path d="M1116.500 754v-4M1115 750.500l1.500-2 1.500 2z" stroke="#fff" />
          <path d="M1132.500 744.500h7v7h-7zM1140 747l3-1.500v5l-3-1.500M1133 742c1.500-2 5-2 7 0M1133 754c1.500 2 5 2 7 0" stroke="#fff" />
          <path d="M1156.500 754c0-6 5-11 11-11M1159.500 755c0-5 4-9 8.500-9M1162.500 755c0-3 2.500-5.500 5.500-5.500" stroke="#ddd" strokeWidth="1.100" />
          <circle cx="1166.500" cy="753.500" r="1.500" fill="#fff" />
        </Art>
        <span className="w-[35px] text-[12px] tracking-[-0.5px]">ENG</span>
        <div className="flex w-[54px] flex-col items-center text-[12px] leading-[18px] tracking-[-0.45px] whitespace-nowrap">
          <span>12:41 PM</span>
          <span>5/27/2024</span>
        </div>
        <Art box={[1268, 728, 94, 40]}>
          <path d="M1285.500 740.500h15v13h-5l-3 3v-3h-7z" stroke="#fff" strokeWidth="1.200" />
          <path d="M1325 741c1-2 3-2.500 8-2.300 2 .3 2.500 1.500 1.500 4l-4 11h-6c-2 0-1.500-2-1-4z" fill="#2097e8" />
          <path d="M1324 747h8l-2.500 7h-5.500c-2 0-1-4 0-7z" fill="#58c25a" />
          <path d="M1335 743.500h5.500c2 0 2.300 1.500 1.700 4l-2 7h-9z" fill="#ce5cc0" />
          <path d="m1332.500 751 9-1-1.500 5h-9z" fill="#f17a72" />
          <path d="M1328 752h15v6.500h-15z" fill="#fdc400" />
          <text x="1335.500" y="757.800" textAnchor="middle" fontSize="6.500" fontWeight="800" fill="#111">PRE</text>
          <path d="M1361.500 729v39" stroke="#66727c" />
        </Art>
      </div>
    </div>
  );
}

export default function App() {
  return (
    <div className="flex h-[768px] w-[1366px] flex-col overflow-hidden bg-[#f3f2f1] font-['Open_Sans','Noto_Sans',sans-serif]">
      <TitleBar />
      <div className="z-10 flex h-[126px] shrink-0 flex-col bg-[#fafafa] shadow-[0_1px_3px_rgba(0,0,0,0.3)]">
        <Menu />
        <Ribbon />
      </div>
      <div className="flex h-[543px] shrink-0">
        <LeftRail />
        <div className="flex w-[1112px] shrink-0 flex-col">
          <div className="flex">
            <Report />
            <FiltersPane />
          </div>
          <PageTabs />
        </div>
        <FormatPane />
        <RightRail />
      </div>
      <StatusBar />
      <TaskBar />
    </div>
  );
}
